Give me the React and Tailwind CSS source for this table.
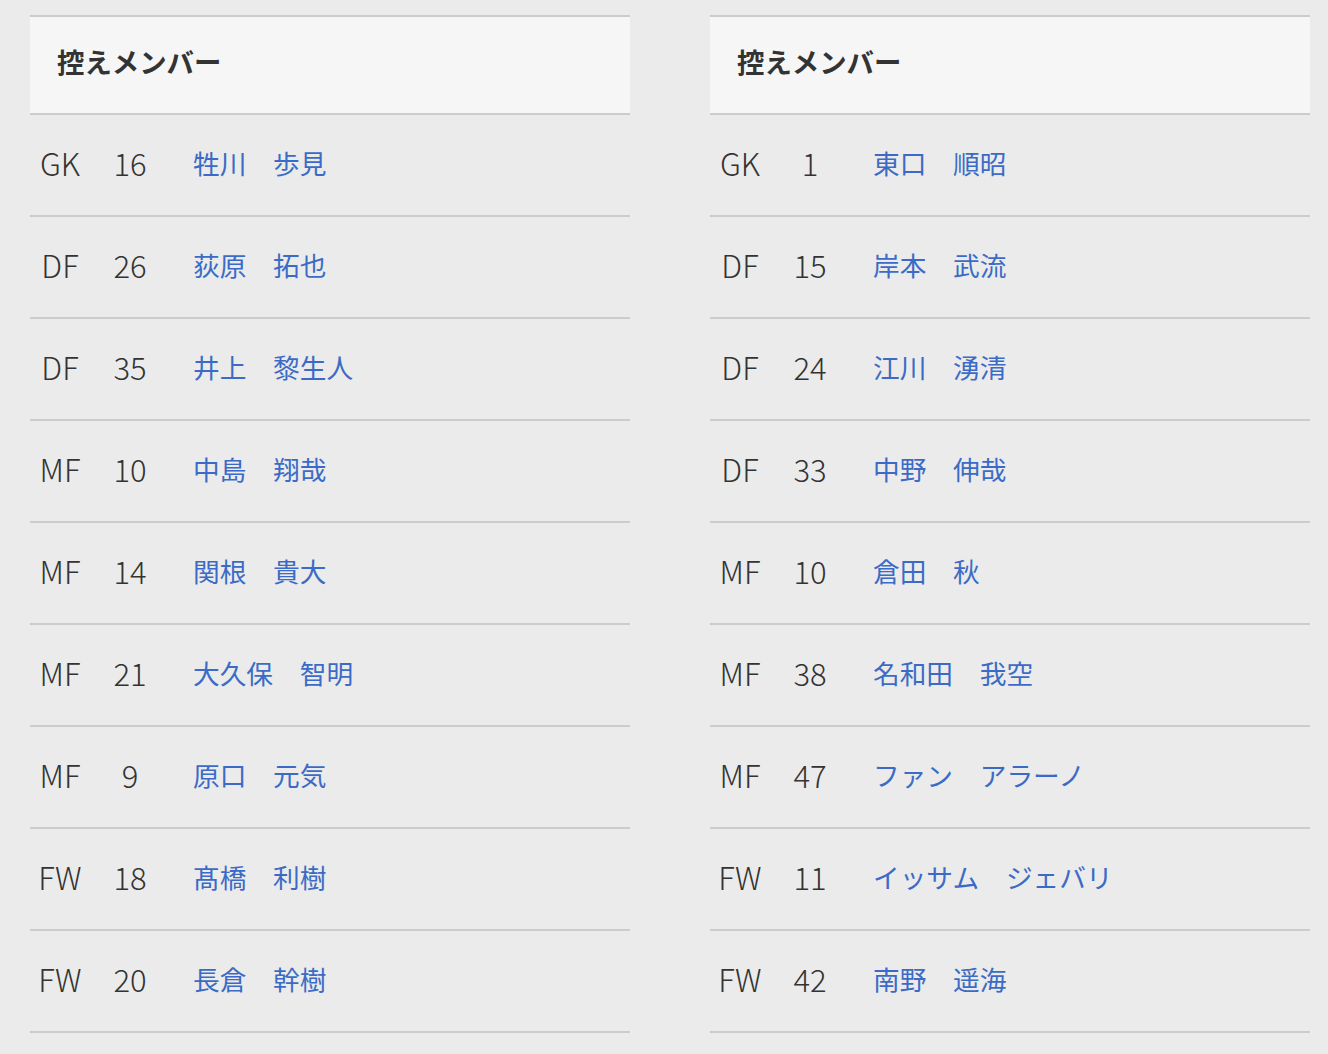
import React from "react";

const left = [
  ["GK", "16", "牲川　歩見"],
  ["DF", "26", "荻原　拓也"],
  ["DF", "35", "井上　黎生人"],
  ["MF", "10", "中島　翔哉"],
  ["MF", "14", "関根　貴大"],
  ["MF", "21", "大久保　智明"],
  ["MF", "9", "原口　元気"],
  ["FW", "18", "髙橋　利樹"],
  ["FW", "20", "長倉　幹樹"],
];

const right = [
  ["GK", "1", "東口　順昭"],
  ["DF", "15", "岸本　武流"],
  ["DF", "24", "江川　湧清"],
  ["DF", "33", "中野　伸哉"],
  ["MF", "10", "倉田　秋"],
  ["MF", "38", "名和田　我空"],
  ["MF", "47", "ファン　アラーノ"],
  ["FW", "11", "イッサム　ジェバリ"],
  ["FW", "42", "南野　遥海"],
];

const SubTable = ({ players }) => {
  return (
    <div className="w-[600px] border-t-2 border-[#cccccc]">
      <div className="h-[98px] bg-[#f6f6f6] border-b-2 border-[#cccccc] flex items-center pl-[27px] pb-[6px]">
        <h3 className="text-[27.4px] font-bold text-[#333333]">控えメンバー</h3>
      </div>
      {players.map((p, i) => (
        <div
          key={i}
          className="h-[102px] border-b-2 border-[#cccccc] flex items-center pb-[3px]"
        >
          <span className="w-[60px] text-center text-[31px] font-light text-[#333333]">{p[0]}</span>
          <span className="w-[80px] text-center text-[31px] font-light text-[#333333]">{p[1]}</span>
          <a className="pl-[23px] text-[26.7px] text-[#3b6bc6]">{p[2]}</a>
        </div>
      ))}
    </div>
  );
};

export default function App() {
  return (
    <div
      className="min-h-[1054px] bg-[#ebebeb] pt-[15px] pl-[30px] flex gap-[80px]"
      style={{ fontFamily: '"Noto Sans CJK JP", "Noto Sans", sans-serif' }}
    >
      <SubTable players={left} />
      <SubTable players={right} />
    </div>
  );
}
